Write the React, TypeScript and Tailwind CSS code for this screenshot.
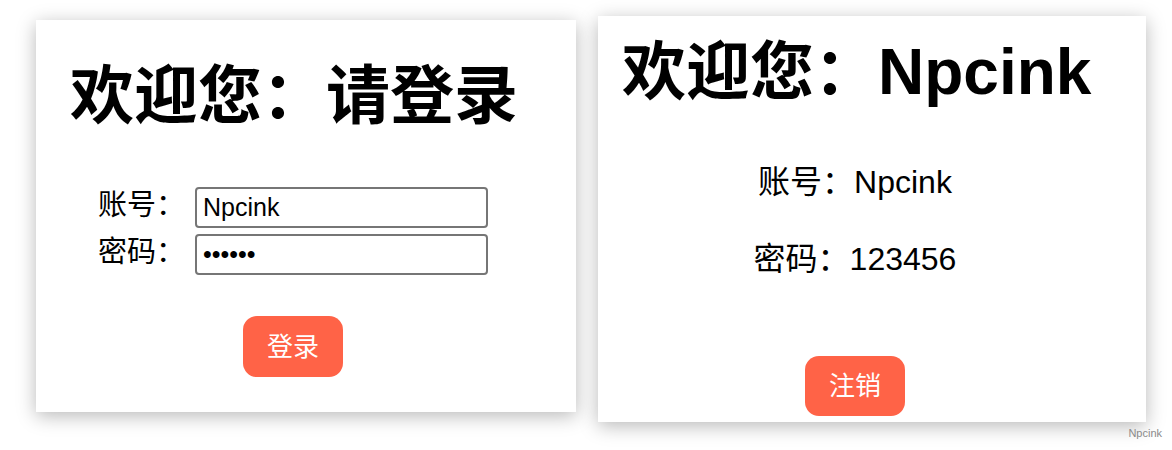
export default function App() {
  const font = { fontFamily: '"Liberation Sans", "Noto Sans CJK SC", sans-serif' }
  return (
    <div className="w-[1172px] h-[450px] bg-white overflow-hidden relative" style={font}>
      <div className="flex items-start gap-[22px] pl-[36px]">
        {/* 登录卡片 */}
        <div className="mt-[20px] w-[540px] h-[392px] bg-white shadow-[0_4px_18px_rgba(0,0,0,0.28)] flex flex-col">
          <h1 className="mt-[44px] ml-[34px] text-[64px] leading-[1] font-bold text-black whitespace-nowrap">
            欢迎您：请登录
          </h1>
          <div className="mt-[59px] flex flex-col gap-[6px]">
            <div className="flex items-center">
              <span className="ml-[62px] w-[97px] text-[29px] leading-[1] text-black -mt-[5px]">账号：</span>
              <input
                className="w-[293px] h-[41px] border-2 border-[#767676] rounded-[4px] px-[6px] text-[25px] text-black outline-none"
                style={font}
                defaultValue="Npcink"
              />
            </div>
            <div className="flex items-center">
              <span className="ml-[62px] w-[97px] text-[29px] leading-[1] text-black -mt-[5px]">密码：</span>
              <input
                type="password"
                className="w-[293px] h-[41px] border-2 border-[#767676] rounded-[4px] px-[6px] text-[25px] text-black outline-none"
                style={font}
                defaultValue="123456"
              />
            </div>
          </div>
          <button className="mt-[41px] ml-[207px] w-[100px] h-[61px] rounded-[14px] bg-[#ff6347] text-white text-[26px] leading-[1]">
            登录
          </button>
        </div>

        {/* 已登录卡片 */}
        <div className="mt-[16px] w-[548px] h-[406px] bg-white shadow-[0_4px_18px_rgba(0,0,0,0.28)] flex flex-col">
          <h1 className="mt-[24px] ml-[24px] text-[64px] leading-[1] font-bold text-black whitespace-nowrap">
            欢迎您：Npcink
          </h1>
          <div className="w-[514px] flex flex-col items-center">
            <p className="mt-[62px] text-[32px] leading-[1] text-black">账号：Npcink</p>
            <p className="mt-[45px] text-[32px] leading-[1] text-black">密码：123456</p>
            <button className="mt-[81px] w-[100px] h-[60px] rounded-[14px] bg-[#ff6347] text-white text-[26px] leading-[1]">
              注销
            </button>
          </div>
        </div>
      </div>
      <span className="absolute right-[10px] bottom-[9px] text-[11px] text-[#8a8a8a]">Npcink</span>
    </div>
  )
}
